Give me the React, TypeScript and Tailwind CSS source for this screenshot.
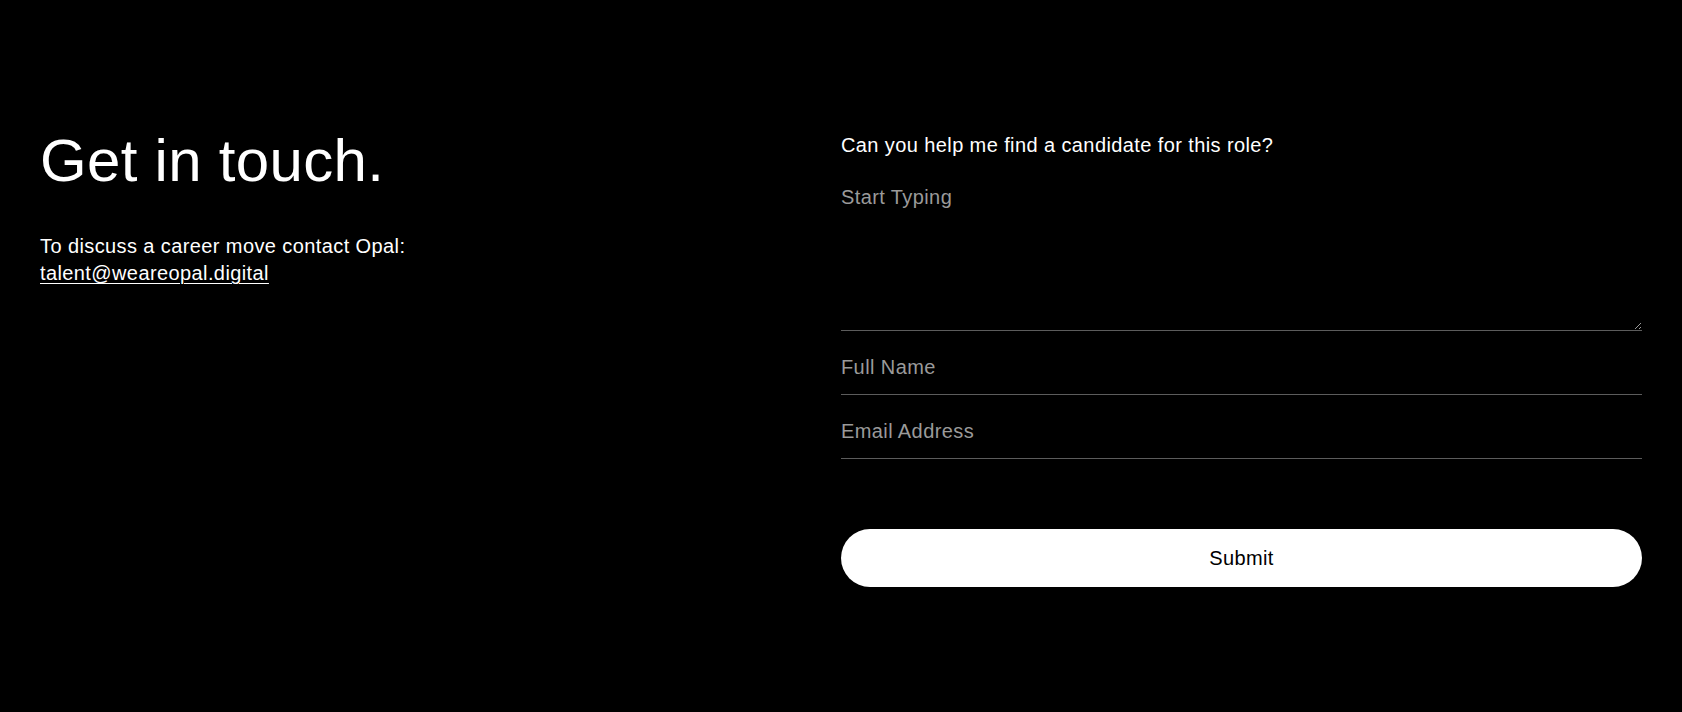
import React from "react";

export default function App() {
  return (
    <div
      className="min-h-[712px] w-full bg-black text-white px-10 pt-[131px] grid grid-cols-2 tracking-[0.4px]"
      style={{ fontFamily: '"Liberation Sans", Arial, sans-serif' }}
    >
      <div>
        <h1 className="text-[60px] leading-[60px] font-normal tracking-[0.3px]">Get in touch.</h1>
        <p className="mt-[42px] text-[20px] leading-[27px]">
          To discuss a career move contact Opal:
          <br />
          <a href="#" className="underline underline-offset-[3px] decoration-1">
            talent@weareopal.digital
          </a>
        </p>
      </div>

      <form className="flex flex-col" onSubmit={(e) => e.preventDefault()}>
        <label className="text-[20px] leading-7">Can you help me find a candidate for this role?</label>
        <textarea
          placeholder="Start Typing"
          className="mt-[24px] h-[148px] w-full bg-transparent text-[20px] leading-7 tracking-[0.4px] text-white placeholder:text-[#9a9a9a] border-b border-[#5c5c5c] outline-none resize-y"
        />
        <input
          type="text"
          placeholder="Full Name"
          className="w-full bg-transparent pt-[22px] pb-[13px] text-[20px] leading-7 tracking-[0.4px] text-white placeholder:text-[#9a9a9a] border-b border-[#5c5c5c] outline-none"
        />
        <input
          type="email"
          placeholder="Email Address"
          className="w-full bg-transparent pt-[22px] pb-[13px] text-[20px] leading-7 tracking-[0.4px] text-white placeholder:text-[#9a9a9a] border-b border-[#5c5c5c] outline-none"
        />
        <button
          type="submit"
          className="mt-[70px] h-[58px] w-full rounded-full bg-white text-black text-[20px] leading-7 tracking-[0.4px]"
        >
          Submit
        </button>
      </form>
    </div>
  );
}
